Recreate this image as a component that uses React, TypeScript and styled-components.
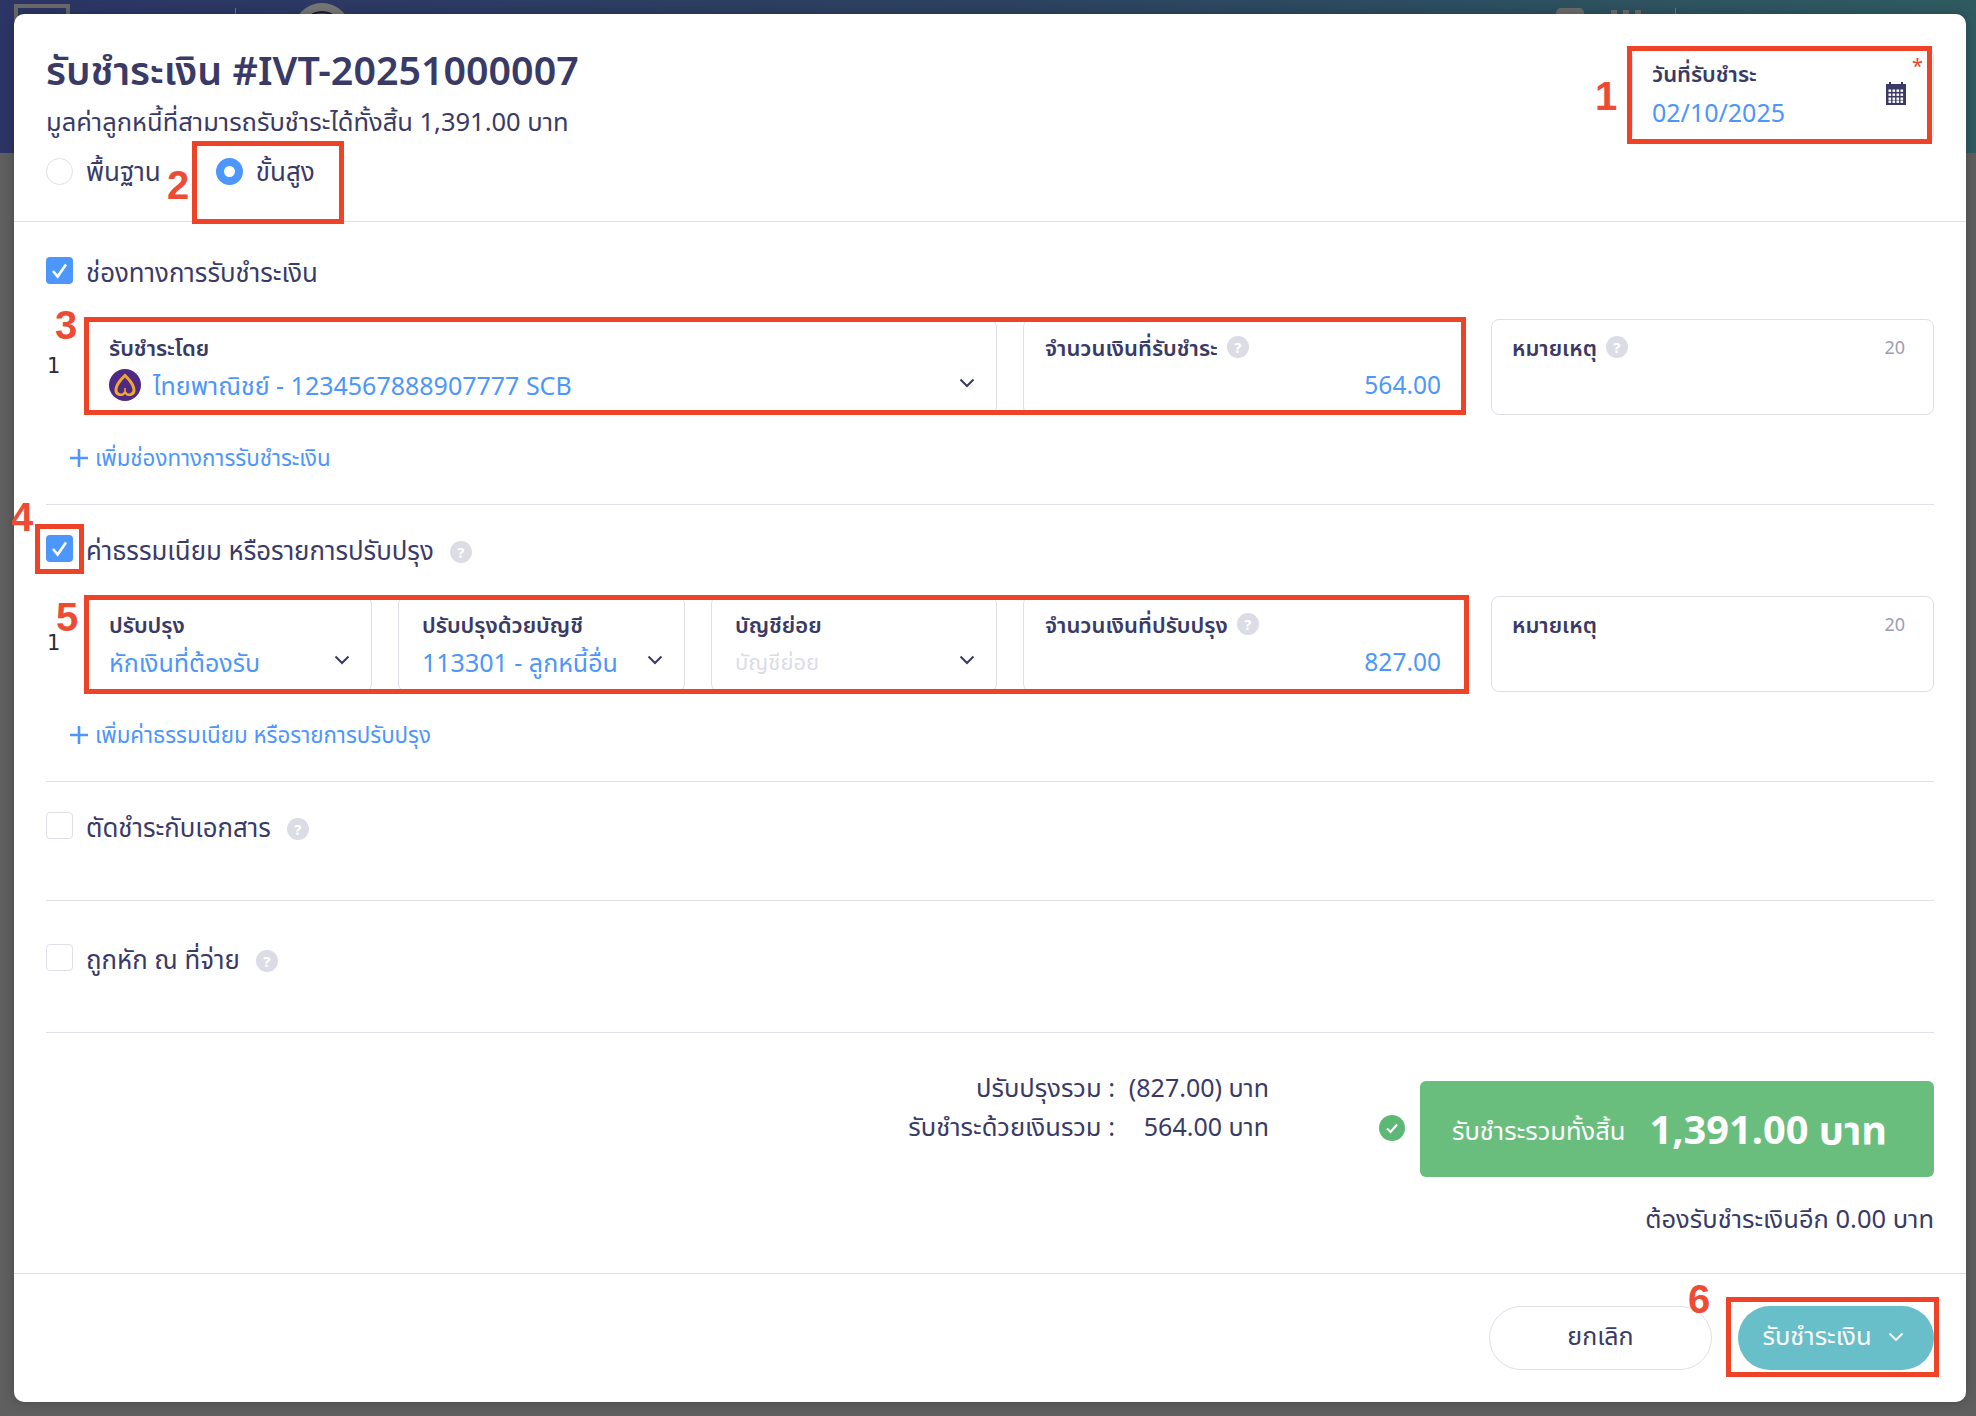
import * as React from 'react';
import styled, { createGlobalStyle } from 'styled-components';

const TEXT = '#3a3a66';
const BLUE = '#4d96fb';
const LINE = '#dfdfe9';
const MARK = '#ee4327';

const GlobalStyle = createGlobalStyle`
	html, body {
		margin: 0;
		padding: 0;
	}
	body {
		font-family: "Noto Sans", "Noto Sans Thai", "Open Sans", sans-serif;
		color: ${TEXT};
	}
	* {
		box-sizing: border-box;
	}
`;

const Chevron = () => (
	<ChevronSvg viewBox="0 0 16 10" width="16" height="10">
		<path d="M1.5 1.5 L8 8 L14.5 1.5" fill="none" stroke={TEXT} strokeWidth="2" />
	</ChevronSvg>
);

const Check = () => (
	<svg viewBox="0 0 27 27" width="27" height="27">
		<path d="M7 14 L11.6 19.5 L20 7.5" fill="none" stroke="#fff" strokeWidth="2.6" />
	</svg>
);

const Plus = () => (
	<svg viewBox="0 0 18 18" width="18" height="18">
		<path d="M9 0 V18 M0 9 H18" stroke={BLUE} strokeWidth="2.6" />
	</svg>
);

const CalendarIcon = () => (
	<svg viewBox="0 0 20 23" width="20" height="23">
		<rect x="3" y="0" width="2" height="4" fill={TEXT} />
		<rect x="15" y="0" width="2" height="4" fill={TEXT} />
		<rect x="0" y="2" width="20" height="21" fill={TEXT} />
		{[8, 12, 16, 19].map((y) =>
			[2, 6, 10, 14].map((x) => (
				<rect key={`${x}-${y}`} x={x + 0.5} y={y - 0.5} width="2.6" height="2.4" fill="#fff" />
			)),
		)}
	</svg>
);

const ScbLogo = () => (
	<svg viewBox="0 0 32 32" width="32" height="32">
		<circle cx="16" cy="16" r="16" fill="#4f2a84" />
		<path
			d="M16 4.5 C11 9 5.5 15 5.5 21.5 C5.5 26.5 11 28 14.5 26.5 L16 25 L17.5 26.5 C21 28 26.5 26.5 26.5 21.5 C26.5 15 21 9 16 4.5 Z M16 8.5 C19.5 12 23.5 17 23.5 21 C23.5 24 20.5 25 18.5 24.2 L16.8 22.5 L16.8 19 L15.2 19 L15.2 22.5 L13.5 24.2 C11.5 25 8.5 24 8.5 21 C8.5 17 12.5 12 16 8.5 Z"
			fill="#efa92c"
			fillRule="evenodd"
		/>
	</svg>
);

const Help = () => <HelpDot>?</HelpDot>;

const Marks = () => (
	<>
		<MarkBox $x={1627} $y={46} $w={305} $h={98} />
		<MarkNum $x={1595} $y={76}>1</MarkNum>
		<MarkBox $x={192} $y={141} $w={152} $h={83} />
		<MarkNum $x={167} $y={165}>2</MarkNum>
		<MarkBox $x={84} $y={317} $w={1382} $h={98} />
		<MarkNum $x={55} $y={305}>3</MarkNum>
		<MarkBox $x={35} $y={524} $w={49} $h={50} />
		<MarkNum $x={11} $y={497}>4</MarkNum>
		<MarkBox $x={84} $y={595} $w={1385} $h={99} />
		<MarkNum $x={56} $y={597}>5</MarkNum>
		<MarkBox $x={1726} $y={1297} $w={213} $h={80} />
		<MarkNum $x={1688} $y={1279}>6</MarkNum>
	</>
);

const App = () => (
	<Page>
		<GlobalStyle />
		<Backdrop>
			<svg viewBox="0 0 1976 20" width="1976" height="20">
				<rect x="16" y="6" width="52" height="20" fill="none" stroke="#6a6a6a" strokeWidth="4" />
				<rect x="235" y="8" width="1" height="12" fill="#777" />
				<circle cx="322" cy="32" r="29" fill="#777" />
				<circle cx="322" cy="32" r="20" fill="#2f5a68" stroke="#1c1c34" strokeWidth="2" />
				<rect x="1556" y="8" width="28" height="20" rx="5" fill="#6c6c6c" />
				<rect x="1611" y="10" width="6" height="12" fill="#6c6c6c" />
				<rect x="1623" y="10" width="6" height="12" fill="#6c6c6c" />
				<rect x="1635" y="10" width="6" height="12" fill="#6c6c6c" />
				<rect x="1675" y="8" width="1" height="12" fill="#777" />
			</svg>
		</Backdrop>
		<Modal>
			<Header>
				<HeaderLeft>
					<Title>รับชำระเงิน #IVT-20251000007</Title>
					<Subtitle>มูลค่าลูกหนี้ที่สามารถรับชำระได้ทั้งสิ้น 1,391.00 บาท</Subtitle>
					<RadioRow>
						<RadioItem>
							<Radio />
							<span>พื้นฐาน</span>
						</RadioItem>
						<RadioItem>
							<Radio $on />
							<span>ขั้นสูง</span>
						</RadioItem>
					</RadioRow>
				</HeaderLeft>
				<DateField>
					<DateText>
						<FieldLabel>วันที่รับชำระ</FieldLabel>
						<DateValue>02/10/2025</DateValue>
					</DateText>
					<CalendarWrap>
						<CalendarIcon />
					</CalendarWrap>
					<Required>*</Required>
				</DateField>
			</Header>

			<Body>
				<Section $top={35} $bottom={31}>
					<SectionTitle>
						<CheckBox $on>
							<Check />
						</CheckBox>
						<span>ช่องทางการรับชำระเงิน</span>
					</SectionTitle>
					<Row $top={32}>
						<RowNumber>1</RowNumber>
						<Fields>
							<Field $grow>
								<FieldLabel>รับชำระโดย</FieldLabel>
								<SelectValue>
									<ScbLogo />
									<BankName>ไทยพาณิชย์ - 1234567888907777 SCB</BankName>
									<Chevron />
								</SelectValue>
							</Field>
							<Field $width={442} $amount>
								<FieldLabel>
									จำนวนเงินที่รับชำระ <Help />
								</FieldLabel>
								<AmountValue>564.00</AmountValue>
							</Field>
						</Fields>
						<Remark>
							<RemarkHead>
								<FieldLabel>
									หมายเหตุ <Help />
								</FieldLabel>
								<Counter>20</Counter>
							</RemarkHead>
						</Remark>
					</Row>
					<AddLink $top={28}>
						<Plus />
						<span>เพิ่มช่องทางการรับชำระเงิน</span>
					</AddLink>
				</Section>

				<Section $top={30} $bottom={31}>
					<SectionTitle>
						<CheckBox $on>
							<Check />
						</CheckBox>
						<span>ค่าธรรมเนียม หรือรายการปรับปรุง</span>
						<TitleHelp>
							<Help />
						</TitleHelp>
					</SectionTitle>
					<Row $top={31}>
						<RowNumber>1</RowNumber>
						<Fields>
							<Field $width={287}>
								<FieldLabel>ปรับปรุง</FieldLabel>
								<SelectValue>
									<SelectText>หักเงินที่ต้องรับ</SelectText>
									<Chevron />
								</SelectValue>
							</Field>
							<Field $width={287}>
								<FieldLabel>ปรับปรุงด้วยบัญชี</FieldLabel>
								<SelectValue>
									<SelectText>113301 - ลูกหนี้อื่น</SelectText>
									<Chevron />
								</SelectValue>
							</Field>
							<Field $width={286}>
								<FieldLabel>บัญชีย่อย</FieldLabel>
								<SelectValue>
									<Placeholder>บัญชีย่อย</Placeholder>
									<Chevron />
								</SelectValue>
							</Field>
							<Field $width={442} $amount>
								<FieldLabel>
									จำนวนเงินที่ปรับปรุง <Help />
								</FieldLabel>
								<AmountValue>827.00</AmountValue>
							</Field>
						</Fields>
						<Remark>
							<RemarkHead>
								<FieldLabel>หมายเหตุ</FieldLabel>
								<Counter>20</Counter>
							</RemarkHead>
						</Remark>
					</Row>
					<AddLink $top={28}>
						<Plus />
						<span>เพิ่มค่าธรรมเนียม หรือรายการปรับปรุง</span>
					</AddLink>
				</Section>

				<Section $top={30} $height={119}>
					<SectionTitle>
						<CheckBox />
						<span>ตัดชำระกับเอกสาร</span>
						<TitleHelp>
							<Help />
						</TitleHelp>
					</SectionTitle>
				</Section>

				<Section $top={43} $height={132}>
					<SectionTitle>
						<CheckBox />
						<span>ถูกหัก ณ ที่จ่าย</span>
						<TitleHelp>
							<Help />
						</TitleHelp>
					</SectionTitle>
				</Section>

				<Summary>
					<SummaryTop>
						<SummaryLines>
							<SummaryLine>
								<span>ปรับปรุงรวม :</span>
								<SummaryAmount>(827.00) บาท</SummaryAmount>
							</SummaryLine>
							<SummaryLine>
								<span>รับชำระด้วยเงินรวม :</span>
								<SummaryAmount>564.00 บาท</SummaryAmount>
							</SummaryLine>
						</SummaryLines>
						<OkDot>
							<svg viewBox="0 0 26 26" width="26" height="26">
								<path d="M8 13.5 L11.6 17 L18 9.5" fill="none" stroke="#fff" strokeWidth="2.2" />
							</svg>
						</OkDot>
						<TotalBox>
							<TotalLabel>รับชำระรวมทั้งสิ้น</TotalLabel>
							<TotalValue>1,391.00 บาท</TotalValue>
						</TotalBox>
					</SummaryTop>
					<Remaining>ต้องรับชำระเงินอีก 0.00 บาท</Remaining>
				</Summary>
			</Body>

			<Footer>
				<CancelButton>ยกเลิก</CancelButton>
				<PayButton>
					<span>รับชำระเงิน</span>
					<svg viewBox="0 0 16 10" width="16" height="10">
						<path d="M1.5 1.5 L8 8 L14.5 1.5" fill="none" stroke="#fff" strokeWidth="1.8" />
					</svg>
				</PayButton>
			</Footer>
		</Modal>
		<Marks />
	</Page>
);

export default App;

const Page = styled.div`
	position: relative;
	width: 1976px;
	height: 1416px;
	padding: 14px 10px 14px 14px;
	background: #5f5f5f;
	overflow: hidden;
`;

const Backdrop = styled.div`
	position: absolute;
	top: 0;
	left: 0;
	width: 100%;
	height: 153px;
	background: linear-gradient(90deg, #2c3566 0%, #2c4260 50%, #2f5b60 100%);
	svg {
		display: block;
	}
`;

const Modal = styled.div`
	position: relative;
	display: flex;
	flex-direction: column;
	height: 1388px;
	background: #fff;
	border-radius: 10px;
	box-shadow: 0 0 12px rgba(0, 0, 0, 0.25);
`;

const Header = styled.div`
	display: flex;
	justify-content: space-between;
	align-items: flex-start;
	height: 208px;
	padding: 34px 32px 0;
	border-bottom: 1px solid ${LINE};
`;

const HeaderLeft = styled.div`
	display: flex;
	flex-direction: column;
`;

const Title = styled.div`
	font-size: 39.4px;
	line-height: 44px;
	font-weight: 600;
`;

const Subtitle = styled.div`
	margin-top: 13px;
	font-size: 25.5px;
	line-height: 32px;
`;

const RadioRow = styled.div`
	display: flex;
	gap: 55px;
	margin-top: 19px;
`;

const RadioItem = styled.div`
	display: flex;
	align-items: center;
	gap: 13px;
	font-size: 26px;
	line-height: 30px;
`;

const Radio = styled.span<{ $on?: boolean }>`
	display: block;
	width: 27px;
	height: 27px;
	border-radius: 50%;
	background: #fff;
	border: ${(p) => (p.$on ? `8px solid ${BLUE}` : `1px solid ${LINE}`)};
`;

const DateField = styled.div`
	position: relative;
	display: flex;
	justify-content: space-between;
	width: 302px;
	height: 94px;
	padding: 10px 27px 0 19px;
	border: 1px solid ${LINE};
	border-radius: 8px;
`;

const DateText = styled.div`
	display: flex;
	flex-direction: column;
`;

const DateValue = styled.div`
	margin-top: 9px;
	color: ${BLUE};
	font-size: 25px;
	line-height: 32px;
`;

const CalendarWrap = styled.div`
	margin-top: 23px;
	svg {
		display: block;
	}
`;

const Required = styled.span`
	position: absolute;
	top: 5px;
	right: 10px;
	color: ${MARK};
	font-size: 20px;
	line-height: 24px;
`;

const Body = styled.div`
	display: flex;
	flex-direction: column;
	flex: 1;
	padding: 0 32px;
`;

const Section = styled.div<{ $top: number; $bottom?: number; $height?: number }>`
	padding-top: ${(p) => p.$top}px;
	padding-bottom: ${(p) => p.$bottom ?? 0}px;
	${(p) => (p.$height ? `height: ${p.$height}px;` : '')}
	border-bottom: 1px solid ${LINE};
`;

const SectionTitle = styled.div`
	display: flex;
	align-items: center;
	gap: 13px;
	font-size: 25.8px;
	line-height: 30px;
`;

const CheckBox = styled.span<{ $on?: boolean }>`
	display: block;
	width: 27px;
	height: 27px;
	margin-top: -3px;
	border-radius: 4px;
	background: ${(p) => (p.$on ? BLUE : '#fff')};
	border: ${(p) => (p.$on ? 'none' : `1px solid ${LINE}`)};
	svg {
		display: block;
	}
`;

const TitleHelp = styled.span`
	display: flex;
	margin: 3px 0 0 3px;
`;

const Row = styled.div<{ $top: number }>`
	display: flex;
	align-items: center;
	gap: 26px;
	margin-top: ${(p) => p.$top}px;
`;

const RowNumber = styled.div`
	width: 12px;
	margin: -2px 0 0 1px;
	font-size: 21px;
	line-height: 24px;
	color: #2b2b3c;
	font-family: "DejaVu Sans", sans-serif;
`;

const Fields = styled.div`
	display: flex;
	flex: 1;
	gap: 26px;
`;

const Field = styled.div<{ $grow?: boolean; $width?: number; $amount?: boolean }>`
	display: flex;
	flex-direction: column;
	${(p) => (p.$grow ? 'flex: 1; min-width: 0;' : `flex: none; width: ${p.$width}px;`)}
	height: 96px;
	padding: 13px 21px 0 ${(p) => (p.$amount ? 21 : 23)}px;
	border: 1px solid ${LINE};
	border-radius: 8px;
`;

const FieldLabel = styled.div`
	display: flex;
	align-items: center;
	gap: 9px;
	font-size: 22px;
	line-height: 28px;
	font-weight: 600;
	white-space: nowrap;
`;

const SelectValue = styled.div`
	display: flex;
	align-items: center;
	gap: 12px;
	height: 32px;
	margin-top: 8px;
`;

const SelectText = styled.div`
	flex: 1;
	color: ${BLUE};
	font-size: 25px;
	line-height: 32px;
	white-space: nowrap;
`;

const BankName = styled(SelectText)``;

const Placeholder = styled(SelectText)`
	margin-top: -3px;
	color: #dcdce6;
	font-size: 22px;
`;

const ChevronSvg = styled.svg`
	flex: none;
	margin: -4px 0 0;
`;

const AmountValue = styled.div`
	margin: 8px 2px 0 0;
	text-align: right;
	color: ${BLUE};
	font-size: 24.5px;
	line-height: 32px;
`;

const Remark = styled.div`
	flex: none;
	width: 443px;
	height: 96px;
	padding: 13px 28px 0 20px;
	border: 1px solid ${LINE};
	border-radius: 8px;
`;

const RemarkHead = styled.div`
	display: flex;
	justify-content: space-between;
	align-items: center;
`;

const Counter = styled.span`
	color: #9d9db5;
	font-size: 18px;
`;

const HelpDot = styled.span`
	display: inline-flex;
	justify-content: center;
	align-items: center;
	width: 22px;
	height: 22px;
	border-radius: 50%;
	background: #dcdce6;
	color: #fff;
	font-size: 15px;
	line-height: 22px;
	font-weight: 700;
`;

const AddLink = styled.div<{ $top: number }>`
	display: flex;
	align-items: center;
	gap: 7px;
	height: 30px;
	margin: ${(p) => p.$top}px 0 0 24px;
	color: ${BLUE};
	font-size: 22.3px;
	line-height: 30px;
`;

const Summary = styled.div`
	display: flex;
	flex-direction: column;
	padding-top: 36px;
`;

const SummaryTop = styled.div`
	display: flex;
	justify-content: flex-end;
	align-items: flex-start;
`;

const SummaryLines = styled.div`
	display: flex;
	flex-direction: column;
	align-items: flex-end;
	margin: -1px 110px 0 0;
`;

const SummaryLine = styled.div`
	display: flex;
	gap: 6px;
	font-size: 25.5px;
	line-height: 39px;
`;

const SummaryAmount = styled.span`
	min-width: 148px;
	text-align: right;
	font-size: 25px;
`;

const OkDot = styled.span`
	display: block;
	width: 26px;
	height: 26px;
	margin: 46px 15px 0 0;
	border-radius: 50%;
	background: #5cb874;
	svg {
		display: block;
	}
`;

const TotalBox = styled.div`
	display: flex;
	align-items: center;
	gap: 24px;
	width: 514px;
	height: 96px;
	margin-top: 12px;
	padding-left: 32px;
	background: #6abe7d;
	border-radius: 6px;
	color: #fff;
`;

const TotalLabel = styled.span`
	margin-top: 6px;
	font-size: 25.5px;
`;

const TotalValue = styled.span`
	margin-top: 4px;
	font-size: 39.8px;
	font-weight: 700;
`;

const Remaining = styled.div`
	margin-top: 26px;
	text-align: right;
	font-size: 25.5px;
	line-height: 30px;
`;

const Footer = styled.div`
	display: flex;
	justify-content: flex-end;
	gap: 26px;
	padding: 32px;
	border-top: 1px solid ${LINE};
`;

const CancelButton = styled.button`
	width: 223px;
	height: 64px;
	padding: 0 0 2px;
	border: 1px solid ${LINE};
	border-radius: 32px;
	background: #fff;
	color: ${TEXT};
	font: inherit;
	font-size: 25px;
`;

const PayButton = styled.button`
	display: flex;
	justify-content: center;
	align-items: center;
	gap: 16px;
	width: 196px;
	height: 64px;
	padding: 0 6px 2px 0;
	border: none;
	border-radius: 32px;
	background: #68bec9;
	color: #fff;
	font: inherit;
	font-size: 25.5px;
`;

const MarkBox = styled.div<{ $x: number; $y: number; $w: number; $h: number }>`
	position: absolute;
	left: ${(p) => p.$x}px;
	top: ${(p) => p.$y}px;
	width: ${(p) => p.$w}px;
	height: ${(p) => p.$h}px;
	border: 5px solid ${MARK};
`;

const MarkNum = styled.div<{ $x: number; $y: number }>`
	position: absolute;
	left: ${(p) => p.$x}px;
	top: ${(p) => p.$y}px;
	color: #ee4b35;
	font-family: "Liberation Sans", Arial, sans-serif;
	font-size: 40px;
	line-height: 40px;
	font-weight: 700;
`;
